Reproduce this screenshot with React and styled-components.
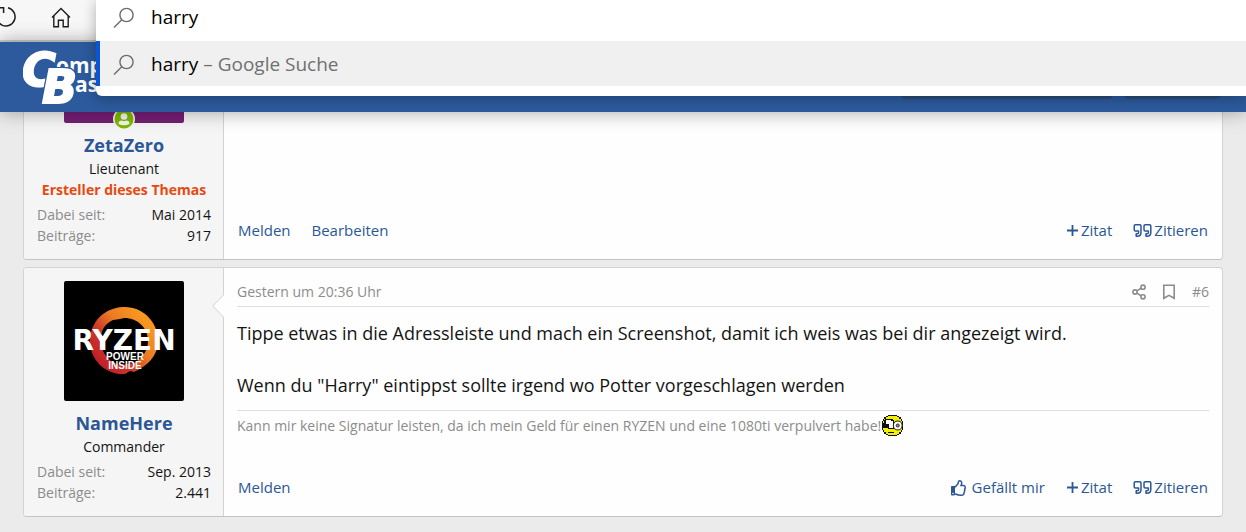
import React from "react";
import styled, { createGlobalStyle, css } from "styled-components";
import { FaRegThumbsUp } from "react-icons/fa";

const colors = {
  page: "#ebebeb",
  brand: "#2c5a9c",
  link: "#2b5797",
  muted: "#8c8c8c",
  text: "#141414",
  accent: "#e8490f",
  border: "#d3d3d3",
  line: "#dfdfdf",
  cell: "#f5f5f5",
  content: "#fefefe"
};

const GlobalStyle = createGlobalStyle`
  * {
    box-sizing: border-box;
  }

  body {
    margin: 0;
    background: ${colors.page};
    color: ${colors.text};
    font-family: "Open Sans", "Noto Sans", sans-serif;
    font-size: 14px;
    line-height: 21px;
  }

  a {
    color: inherit;
    text-decoration: none;
  }
`;

const Window = styled.div`
  position: relative;
  overflow: hidden;
`;

const BrowserBar = styled.div`
  display: flex;
  align-items: center;
  gap: 34px;
  height: 42px;
  padding: 0 0 6px;
  background: #f7f7f7;
  border-bottom: 2px solid #d0d0d0;
`;

const BarButton = styled.button`
  display: flex;
  padding: 0;
  border: 0;
  background: none;
  color: #1c1c1c;
`;

const Omnibox = styled.div`
  position: absolute;
  z-index: 3;
  top: 0;
  left: 96px;
  right: 0;
  padding-bottom: 10px;
  background: #fff;
  border-radius: 0 0 0 6px;
  box-shadow: 0 2px 14px rgba(0, 0, 0, 0.3);
  font-size: 19px;
`;

const OmniRow = styled.div`
  display: flex;
  align-items: center;
  gap: 16px;
  height: 41px;
  padding: 0 0 6px 17px;

  ${p =>
    p.$selected &&
    css`
      height: 45px;
      padding: 2px 0 0 13px;
      border-left: 4px solid #0a56d8;
      background: #f0f0f0;
    `}
`;

const OmniInput = styled.input`
  flex: 1;
  padding: 0;
  border: 0;
  outline: 0;
  background: none;
  color: #000;
  font: inherit;
`;

const OmniText = styled.div`
  color: #707070;

  span {
    color: #000;
  }
`;

const Header = styled.header`
  position: relative;
  z-index: 2;
  display: flex;
  justify-content: space-between;
  height: 70px;
  padding: 0 24px 0 23px;
  background: ${colors.brand};
  box-shadow: 0 0 18px rgba(0, 0, 0, 0.35);
`;

const LogoInitial = styled.text`
  font: italic 700 46px "DejaVu Sans", sans-serif;
  stroke: #fff;
  stroke-width: 2px;
  filter: drop-shadow(1px 0 0 ${colors.brand}) drop-shadow(-1px 0 0 ${colors.brand})
    drop-shadow(0 -1px 0 ${colors.brand});
`;

const HeaderNav = styled.nav`
  display: flex;
  gap: 9px;
`;

const NavPill = styled.div`
  width: ${p => p.$width}px;
  height: 57px;
  border-radius: 0 0 6px 6px;
  background: #2a4c7c;
`;

const Thread = styled.main`
  display: flex;
  flex-direction: column;
  gap: 7px;
  padding: 0 23px 15px;
`;

const Post = styled.article`
  display: flex;
  border: 1px solid ${colors.border};
  border-bottom-color: #c4c4c4;
  border-radius: 4px;
  background: ${colors.content};

  ${p =>
    p.$cut &&
    css`
      border-top: 0;
      border-top-left-radius: 0;
      border-top-right-radius: 0;
    `}
`;

const UserCell = styled.section`
  position: relative;
  flex: 0 0 200px;
  padding: ${p => (p.$cut ? 0 : 13)}px 12px 13px 13px;
  border-right: 1px solid ${colors.border};
  border-radius: 3px 0 0 3px;
  background: ${colors.cell};
  text-align: center;
`;

const Pointer = styled.svg`
  position: absolute;
  top: 26px;
  right: -1px;
`;

const Avatar = styled.div`
  position: relative;
  display: flex;
  width: 120px;
  margin: 0 auto 10px;

  > svg {
    border-radius: 2px;
  }
`;

const PurpleAvatar = styled.div`
  width: 120px;
  height: 11px;
  border-radius: 0 0 2px 2px;
  background: #751e73;
`;

const OnlineBadge = styled.svg`
  position: absolute;
  left: 49px;
  bottom: -7px;
`;

const UserName = styled.h4`
  margin: 0 0 1px;
  color: ${colors.link};
  font-size: 18px;
  line-height: 24px;
`;

const UserTitle = styled.div`
  font-weight: ${p => (p.$starter ? 700 : 400)};
  color: ${p => (p.$starter ? colors.accent : colors.text)};
`;

const Stats = styled.dl`
  margin: 4px 0 0;
`;

const Stat = styled.div`
  display: flex;
  justify-content: space-between;

  dt {
    color: ${colors.muted};
  }

  dd {
    margin: 0;
  }
`;

const Content = styled.section`
  flex: 1;
  display: flex;
  flex-direction: column;
  padding: 13px 13px 18px;
`;

const PostHead = styled.div`
  display: flex;
  justify-content: space-between;
  align-items: center;
  height: 26px;
  padding-bottom: 4px;
  border-bottom: 1px solid ${colors.line};
  color: ${colors.muted};
`;

const HeadLinks = styled.div`
  display: flex;
  align-items: center;
  gap: 16px;

  a {
    display: flex;
  }
`;

const Message = styled.div`
  padding: 13px 0 12px;
  font-size: 18px;
  line-height: 26px;

  p {
    margin: 0 0 26px;
  }

  p:last-child {
    margin: 0;
  }
`;

const Signature = styled.div`
  display: flex;
  align-items: center;
  gap: 1px;
  padding-top: 4px;
  border-top: 1px solid ${colors.line};
  color: ${colors.muted};
`;

const PostFoot = styled.footer`
  display: flex;
  justify-content: space-between;
  margin-top: auto;
  padding: 0 1px;
  color: ${colors.link};
  font-size: 15px;
`;

const Actions = styled.div`
  display: flex;
  gap: 21px;
`;

const Action = styled.a`
  display: flex;
  align-items: center;
  gap: ${p => p.$gap || 2}px;
`;

const SearchIcon = () => (
  <svg width="22" height="22" viewBox="0 0 22 22" fill="none" stroke="#6b6b6b" strokeWidth="1.4">
    <circle cx="13.5" cy="8" r="6.6" />
    <path d="M8.8 12.7 1 20.5" />
  </svg>
);

const ReloadIcon = () => (
  <svg width="17" height="22" viewBox="0 0 17 22" fill="none" stroke="currentColor" strokeWidth="1.5">
    <path d="M8 1.8A9.2 9.2 0 1 1 -2 6" />
    <path d="M-1 1.8H3.6V7" />
  </svg>
);

const HomeIcon = () => (
  <svg width="20" height="21" viewBox="0 0 20 21" fill="none" stroke="currentColor" strokeWidth="1.4">
    <path d="M1 10.5 10 1.6l9 8.9" />
    <path d="M2.8 9v10.8h4.6v-6.6h4.8v6.6h5V9" />
  </svg>
);

const Logo = () => (
  <svg width="150" height="70" viewBox="0 0 150 70" fill="#fff" fontFamily="Open Sans, sans-serif">
    <text x="33" y="31" fontSize="21" fontWeight="700">omputer</text>
    <text x="52" y="50" fontSize="21" fontWeight="700">ase</text>
    <LogoInitial x="-1" y="44">C</LogoInitial>
    <LogoInitial x="19" y="61">B</LogoInitial>
  </svg>
);

const PlusIcon = () => (
  <svg width="13" height="13" viewBox="0 0 13 13" stroke="currentColor" strokeWidth="1.8">
    <path d="M1 6.5h11M6.5 1v11" />
  </svg>
);

const QuoteIcon = () => (
  <svg width="19" height="15" viewBox="0 0 19 15" fill="none" stroke="currentColor" strokeWidth="1.5" strokeLinejoin="round">
    <path d="M2.4 1.8h4.4q1.2 0 1.2 1.2v6.4q0 3.8-4 3.8H3.2v-2.4H4q1.6 0 1.6-1.4V8H2.4Q1.2 8 1.2 6.8V3q0-1.2 1.2-1.2z" />
    <path d="M12.2 1.8h4.4q1.2 0 1.2 1.2v6.4q0 3.8-4 3.8H13v-2.4h.8q1.6 0 1.6-1.4V8h-3.2Q11 8 11 6.8V3q0-1.2 1.2-1.2z" />
  </svg>
);

const ShareIcon = () => (
  <svg width="14" height="16" viewBox="0 0 14 16" fill="none" stroke="currentColor" strokeWidth="1.6">
    <circle cx="3" cy="8" r="2.1" />
    <circle cx="11" cy="3.2" r="2.1" />
    <circle cx="11" cy="12.8" r="2.1" />
    <path d="M4.9 6.9 9.1 4.3M4.9 9.1l4.2 2.6" />
  </svg>
);

const BookmarkIcon = () => (
  <svg width="14" height="16" viewBox="0 0 14 16" fill="none" stroke="currentColor" strokeWidth="1.6">
    <path d="M1.8 1.3h10.4v13L7 11.4l-5.2 2.9z" />
  </svg>
);

const RyzenAvatar = () => (
  <svg width="120" height="120" viewBox="0 0 120 120">
    <defs>
      <linearGradient id="ring" x1="0.1" y1="0.8" x2="0.8" y2="0.2">
        <stop offset="0" stopColor="#c01f28" />
        <stop offset="0.35" stopColor="#cc3a28" />
        <stop offset="0.65" stopColor="#ea7a24" />
        <stop offset="1" stopColor="#f7971f" />
      </linearGradient>
    </defs>
    <rect width="120" height="120" fill="#000" />
    <path
      fill="url(#ring)"
      fillRule="evenodd"
      d="M59 26C78 25 94 40 94 60c0 14-10 25-24 31l-4-1-5 3C41 94 26 79 26 60 26 41 40 27 59 26zM60 37l-4 1-7 1C40 43 36 51 37 60c0 13 10 23 21 24l12-2c9-5 14-13 14-22C84 47 74 37 60 37z"
    />
    <g fill="#fff" textAnchor="middle">
      <text x="60" y="69" fontFamily="DejaVu Sans, sans-serif" fontWeight="700" fontSize="28">RYZEN</text>
      <g fontFamily="Liberation Sans, sans-serif" fontWeight="700" fontSize="10">
        <text x="61" y="79">POWER</text>
        <text x="61" y="88">INSIDE</text>
      </g>
    </g>
  </svg>
);

const Smiley = () => (
  <svg width="21" height="21" viewBox="0 0 20 20">
    <g shapeRendering="crispEdges">
      <path fill="#111" d="M6 0h8v1h2v1h2v2h1v2h1v8h-1v2h-1v2h-2v1h-2v1H6v-1H4v-1H2v-2H1v-2H0V6h1V4h1V2h2V1h2z" />
      <path fill="#f4ee00" d="M6 1h8v1h2v2h2v2h1v8h-1v2h-2v2h-2v1H6v-1H4v-2H2v-2H1V6h1V4h2V2h2z" />
      <path fill="#111" d="M3 4h7v1h1v8H6v-1H0V8h2V5h1z" />
      <path fill="#fff" d="M4 5h5v1h1v6H7V9H4z" />
      <path fill="#111" d="M6 16h5v1H6z" />
    </g>
    <circle cx="15" cy="10" r="4.2" fill="#fff" stroke="#222" />
    <circle cx="15" cy="10" r="1.5" fill="#888" stroke="#222" strokeWidth="0.8" />
  </svg>
);

const posts = [
  {
    id: 5,
    cut: true,
    name: "ZetaZero",
    title: "Lieutenant",
    starter: true,
    joined: "Mai 2014",
    count: "917",
    left: ["Melden", "Bearbeiten"]
  },
  {
    id: 6,
    name: "NameHere",
    title: "Commander",
    joined: "Sep. 2013",
    count: "2.441",
    date: "Gestern um 20:36 Uhr",
    message: [
      "Tippe etwas in die Adressleiste und mach ein Screenshot, damit ich weis was bei dir angezeigt wird.",
      'Wenn du "Harry" eintippst sollte irgend wo Potter vorgeschlagen werden'
    ],
    signature: "Kann mir keine Signatur leisten, da ich mein Geld für einen RYZEN und eine 1080ti verpulvert habe!",
    left: ["Melden"],
    likeable: true
  }
];

const PostItem = ({ post }) => (
  <Post $cut={post.cut}>
    <UserCell $cut={post.cut}>
      <Avatar>
        {post.cut ? (
          <>
            <PurpleAvatar />
            <OnlineBadge width="22" height="22" viewBox="0 0 22 22">
              <circle cx="11" cy="11" r="11" fill={colors.cell} />
              <circle cx="11" cy="11" r="9.5" fill="#7fb900" />
              <circle cx="11" cy="8.5" r="3.3" fill={colors.cell} />
              <path d="M5.5 16q0-3.4 3.2-3.4 2.3 1 4.6 0 3.2 0 3.2 3.4-5.5 2.6-11 0z" fill={colors.cell} />
            </OnlineBadge>
          </>
        ) : (
          <RyzenAvatar />
        )}
      </Avatar>
      <UserName>
        <a href="#user">{post.name}</a>
      </UserName>
      <UserTitle>{post.title}</UserTitle>
      {post.starter && <UserTitle $starter>Ersteller dieses Themas</UserTitle>}
      <Stats>
        <Stat>
          <dt>Dabei seit:</dt>
          <dd>{post.joined}</dd>
        </Stat>
        <Stat>
          <dt>Beiträge:</dt>
          <dd>{post.count}</dd>
        </Stat>
      </Stats>
      {!post.cut && (
        <Pointer width="12" height="24" viewBox="0 0 12 24">
          <path d="M12 .5 .8 12 12 23.5" fill={colors.content} stroke={colors.border} />
        </Pointer>
      )}
    </UserCell>
    <Content>
      {post.message && (
        <>
          <PostHead>
            <a href="#post">{post.date}</a>
            <HeadLinks>
              <a href="#share" aria-label="Teilen">
                <ShareIcon />
              </a>
              <a href="#bookmark" aria-label="Lesezeichen">
                <BookmarkIcon />
              </a>
              <a href="#post">#{post.id}</a>
            </HeadLinks>
          </PostHead>
          <Message>
            {post.message.map(line => (
              <p key={line}>{line}</p>
            ))}
          </Message>
          <Signature>
            {post.signature}
            <Smiley />
          </Signature>
        </>
      )}
      <PostFoot>
        <Actions>
          {post.left.map(label => (
            <Action key={label} href="#action">
              {label}
            </Action>
          ))}
        </Actions>
        <Actions>
          {post.likeable && (
            <Action href="#like" $gap={5}>
              <FaRegThumbsUp size={16} />
              Gefällt mir
            </Action>
          )}
          <Action href="#multiquote">
            <PlusIcon />
            Zitat
          </Action>
          <Action href="#quote">
            <QuoteIcon />
            Zitieren
          </Action>
        </Actions>
      </PostFoot>
    </Content>
  </Post>
);

const App = () => (
  <Window>
    <GlobalStyle />
    <BrowserBar>
      <BarButton aria-label="Neu laden">
        <ReloadIcon />
      </BarButton>
      <BarButton aria-label="Startseite">
        <HomeIcon />
      </BarButton>
    </BrowserBar>
    <Omnibox>
      <OmniRow>
        <SearchIcon />
        <OmniInput aria-label="Adressleiste" defaultValue="harry" />
      </OmniRow>
      <OmniRow $selected>
        <SearchIcon />
        <OmniText>
          <span>harry</span> – Google Suche
        </OmniText>
      </OmniRow>
    </Omnibox>
    <Header>
      <a href="#home" aria-label="ComputerBase">
        <Logo />
      </a>
      <HeaderNav>
        <NavPill $width={214} />
        <NavPill $width={99} />
      </HeaderNav>
    </Header>
    <Thread>
      {posts.map(post => (
        <PostItem key={post.id} post={post} />
      ))}
    </Thread>
  </Window>
);

export default App;
